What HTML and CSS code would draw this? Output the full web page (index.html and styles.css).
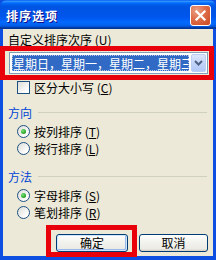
FILE: index.html
```html
<!DOCTYPE html>
<html lang="zh-CN">
<head>
    <meta charset="UTF-8">
    <meta name="viewport" content="width=device-width, initial-scale=1.0">
    <link rel="stylesheet" href="styles.css">
</head>
<body>
    <div class="window">
        <div class="titlebar">
            <span class="title">排序选项</span>
            <div class="close-btn">
                <svg width="13" height="13" viewBox="0 0 13 13">
                    <path d="M2.5 2.5 L10.5 10.5 M10.5 2.5 L2.5 10.5" stroke="#fff" stroke-width="2.2" stroke-linecap="square"/>
                </svg>
            </div>
        </div>
        <div class="content">
            <div class="field-label">自定义排序次序 (<u>U</u>)</div>
            <div class="combo">
                <div class="combo-value"><span class="sel">星期日，星期一，星期二，星期三</span></div>
                <div class="combo-btn">
                    <svg width="9" height="6" viewBox="0 0 9 6">
                        <path d="M1 1 L4.5 4.5 L8 1" stroke="#4D6185" stroke-width="2" fill="none"/>
                    </svg>
                </div>
            </div>
            <div class="check-row">
                <span class="checkbox"></span>
                <span>区分大小写 (<u>C</u>)</span>
            </div>

            <div class="group-head"><span>方向</span><span class="rule"></span></div>
            <div class="radio-row first"><span class="radio checked"></span><span>按列排序 (<u>T</u>)</span></div>
            <div class="radio-row"><span class="radio"></span><span>按行排序 (<u>L</u>)</span></div>

            <div class="group-head second"><span>方法</span><span class="rule"></span></div>
            <div class="radio-row first"><span class="radio checked"></span><span>字母排序 (<u>S</u>)</span></div>
            <div class="radio-row"><span class="radio"></span><span>笔划排序 (<u>R</u>)</span></div>

            <div class="buttons">
                <div class="btn default">确定</div>
                <div class="btn cancel">取消</div>
            </div>
        </div>
        <div class="mark mark-combo"></div>
        <div class="mark mark-ok"></div>
    </div>
</body>
</html>
```

FILE: styles.css
```css
body {
   margin: 0;
   font-family: "Noto Sans CJK SC", "Noto Sans", sans-serif;
   font-size: 12px;
   color: #000;
}
.window {
   position: relative;
   width: 216px;
   height: 260px;
   display: flex;
   flex-direction: column;
   background: #0D4FE0;
   overflow: hidden;
}
.titlebar {
   height: 29px;
   flex: none;
   display: flex;
   align-items: center;
   justify-content: space-between;
   padding: 0 5px 0 6px;
   border-radius: 7px 7px 0 0;
   background: linear-gradient(to bottom, #0058EE 0%, #3593FF 4%, #288EFF 6%, #127DFF 8%, #036FFC 10%, #0262EE 14%, #0057E5 20%, #0054E3 24%, #0055EB 56%, #005BF5 66%, #026AFE 76%, #0062EF 86%, #0052D6 92%, #0040AB 94%, #003092 100%);
}
.title {
   color: #fff;
   font-weight: bold;
   font-size: 12px;
   letter-spacing: 1px;
   text-shadow: 1px 1px #0F1089;
   margin-top: 1px;
}
.close-btn {
   width: 19px;
   height: 19px;
   border: 1px solid #fff;
   border-radius: 3px;
   display: flex;
   align-items: center;
   justify-content: center;
   background: radial-gradient(circle at 30% 25%, #EBA188 0%, #E0714E 40%, #C9471F 100%);
   margin-top: 2px;
}
.content {
   flex: 1;
   margin: 0 3px 4px 3px;
   background: #ECE9D8;
   display: flex;
   flex-direction: column;
   padding: 0 5px 0 5px;
}
.field-label {
   margin-top: 4px;
   height: 14px;
   line-height: 14px;
}
.combo {
   margin-top: 5px;
   margin-left: 1px;
   height: 20px;
   border: 1px solid #7F9DB9;
   background: #fff;
   display: flex;
   align-items: center;
   padding: 0 1px 0 2px;
}
.combo-value {
   flex: 1;
   height: 16px;
   overflow: hidden;
   white-space: nowrap;
   background: #316AC5;
   outline: 1px dotted #B0C4EA;
   outline-offset: -1px;
   margin-right: 2px;
}
.sel {
   color: #fff;
   line-height: 16px;
   padding-left: 1px;
}
.combo-btn {
   width: 15px;
   height: 18px;
   border: 1px solid #B9CDF5;
   border-radius: 2px;
   box-sizing: border-box;
   background: linear-gradient(to bottom, #DCE6FC, #C0D2F9 60%, #B2C8F7);
   display: flex;
   align-items: center;
   justify-content: center;
}
.check-row, .radio-row {
   display: flex;
   align-items: center;
   gap: 4px;
   height: 17px;
   padding-left: 9px;
}
.check-row {
   margin-top: 5px;
}
.checkbox {
   width: 11px;
   height: 11px;
   border: 1px solid #1C5180;
   background: linear-gradient(135deg, #DCDCD7, #FFFFFF 80%);
}
.group-head {
   display: flex;
   align-items: center;
   height: 14px;
   margin-top: 9px;
   color: #0046D5;
}
.group-head.second {
   margin-top: 12px;
}
.rule {
   flex: 1;
   height: 1px;
   background: #D0D0BF;
   margin-left: 6px;
   margin-right: 1px;
}
.radio-row.first {
   margin-top: 4px;
}
.radio {
   width: 11px;
   height: 11px;
   border: 1px solid #1C5180;
   border-radius: 50%;
   background: linear-gradient(135deg, #DCDCD7, #FFFFFF 80%);
   display: flex;
   align-items: center;
   justify-content: center;
}
.radio.checked::after {
   content: "";
   width: 5px;
   height: 5px;
   border-radius: 50%;
   background: radial-gradient(circle at 35% 35%, #7BE27A, #21A121 70%);
}
.buttons {
   display: flex;
   justify-content: flex-end;
   gap: 11px;
   margin-top: 13px;
}
.btn {
   height: 16px;
   line-height: 16px;
   text-align: center;
   border: 1px solid #003C74;
   border-radius: 3px;
   background: linear-gradient(to bottom, #FFFFFF, #F3F3EF 40%, #ECEBE6 85%, #D6D0C5);
}
.btn.default {
   width: 70px;
   box-shadow: inset 0 0 0 1px #CEE7FF, inset -1px -1px 0 1px #98B8EA;
}
.btn.cancel {
   width: 67px;
}
.mark {
   position: absolute;
   border: 5px solid #E8000B;
   box-sizing: border-box;
}
.mark-combo {
   left: 0;
   top: 46px;
   width: 214px;
   height: 34px;
}
.mark-ok {
   left: 46px;
   top: 225px;
   width: 91px;
   height: 32px;
}
```
